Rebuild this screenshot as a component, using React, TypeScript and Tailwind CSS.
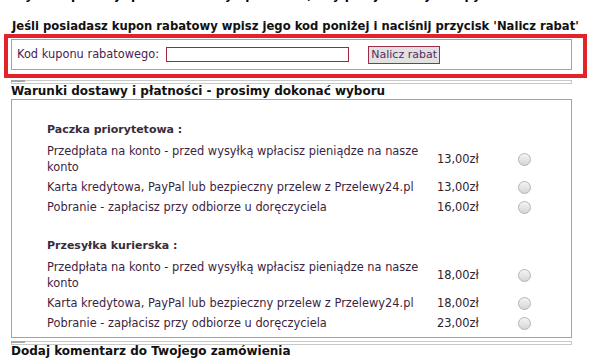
import React from "react";

const font = { fontFamily: '"DejaVu Sans", Verdana, sans-serif' };

function Radio() {
  return (
    <span className="inline-block w-[13px] h-[13px] rounded-full border border-[#b4b4b4] bg-gradient-to-b from-[#f4f4f4] to-[#d6d6d6]" />
  );
}

type Row = { label: string; price: string };

function Group({ title, rows }: { title: string; rows: Row[] }) {
  return (
    <div className="pl-[35px]">
      <div className="h-[18px] leading-[18px] font-bold text-[11px] text-[#3a2b3a]">{title}</div>
      <div className="mt-[2px]">
        {rows.map((r, i) => (
          <div key={i} className="grid grid-cols-[390px_72px_30px] items-center py-[2px]">
            <div className="leading-[16px] text-[11.4px] text-[#3d1f3f] pr-[6px]">{r.label}</div>
            <div className="leading-[16px] text-[11.4px] text-[#2e2230]">{r.price}</div>
            <div className="flex justify-center items-center">
              <Radio />
            </div>
          </div>
        ))}
      </div>
    </div>
  );
}

function DoubleLine() {
  return (
    <div className="relative h-[4px] border border-[#c8c8c8]">
      <div className="absolute left-[-1px] top-[-1px] w-[14px] h-[2px] bg-[#a8a8a8]" />
    </div>
  );
}

export default function App() {
  return (
    <div className="relative w-[593px] h-[358px] overflow-hidden bg-white text-black" style={font}>
      <div className="h-[3px] overflow-hidden">
        <div className="mt-[-12px] pl-[12px] leading-[14px] text-[12px] font-bold whitespace-nowrap">
          Wybierz poniżej sposób dostawy i płatności, aby przejść dalej w zapytaniu
        </div>
      </div>
      <div className="mt-[15px] pl-[12px] h-[16px] leading-[16px] text-[11.6px] font-bold whitespace-nowrap text-[#111]">
        Jeśli posiadasz kupon rabatowy wpisz jego kod poniżej i naciśnij przycisk 'Nalicz rabat'
      </div>
      <div className="ml-[11px] w-[561px]">
        <div className="mt-[5px] h-[31px] border border-[#a3a3a3] flex items-center pl-[5px]">
          <span className="text-[11.4px] text-[#4a2350] whitespace-nowrap">Kod kuponu rabatowego:</span>
          <input
            type="text"
            className="ml-[7px] w-[183px] h-[15px] border border-[#a3243d] bg-white outline-none"
          />
          <button
            type="button"
            className="ml-[19px] w-[72px] h-[18px] border border-[#9b2f4a] bg-[#e1e1e1] text-[11px] leading-[16px] text-[#5b2a5e]"
            style={font}
          >
            Nalicz rabat
          </button>
        </div>
        <div className="mt-[10px]">
          <DoubleLine />
        </div>
        <div className="h-[15px] leading-[15px] text-[12px] font-bold whitespace-nowrap text-[#111]">
          Warunki dostawy i płatności - prosimy dokonać wyboru
        </div>
        <div className="h-[239px] border border-[#a3a3a3] pt-[21px]">
          <Group
            title="Paczka priorytetowa :"
            rows={[
              { label: "Przedpłata na konto - przed wysyłką wpłacisz pieniądze na nasze konto", price: "13,00zł" },
              { label: "Karta kredytowa, PayPal lub bezpieczny przelew z Przelewy24.pl", price: "13,00zł" },
              { label: "Pobranie - zapłacisz przy odbiorze u doręczyciela", price: "16,00zł" },
            ]}
          />
          <div className="h-[20px]" />
          <Group
            title="Przesyłka kurierska :"
            rows={[
              { label: "Przedpłata na konto - przed wysyłką wpłacisz pieniądze na nasze konto", price: "18,00zł" },
              { label: "Karta kredytowa, PayPal lub bezpieczny przelew z Przelewy24.pl", price: "18,00zł" },
              { label: "Pobranie - zapłacisz przy odbiorze u doręczyciela", price: "23,00zł" },
            ]}
          />
        </div>
        <div className="mt-[3px]">
          <DoubleLine />
        </div>
        <div className="h-[13px] leading-[13px] text-[12px] font-bold whitespace-nowrap text-[#111]">
          Dodaj komentarz do Twojego zamówienia
        </div>
      </div>
      <div className="absolute left-[4px] top-[34px] w-[583px] h-[44px] border-[4px] border-[#e3222b] pointer-events-none" />
    </div>
  );
}
